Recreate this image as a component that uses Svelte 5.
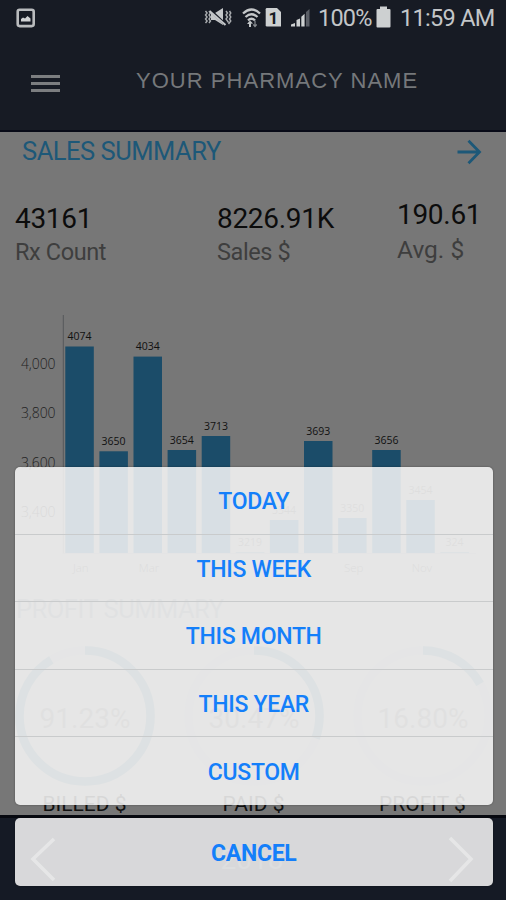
<script>
  const base = 553;
  const months = [
    { value: '4074', top: 346.5, month: 'Jan' },
    { value: '3650', top: 451.3 },
    { value: '4034', top: 356.6, month: 'Mar' },
    { value: '3654', top: 450 },
    { value: '3713', top: 436 },
    { value: '3219', top: 552.4 },
    { value: '3344', top: 520 },
    { value: '3693', top: 441 },
    { value: '3350', top: 518, month: 'Sep' },
    { value: '3656', top: 450 },
    { value: '3454', top: 500, month: 'Nov' },
    { value: '324', top: 552.4 }
  ].map((m, i) => ({ ...m, x: 65.3 + i * 34.1 }));
  const ticks = [
    { label: '4,000', y: 369 },
    { label: '3,800', y: 418 },
    { label: '3,600', y: 467.5 },
    { label: '3,400', y: 517 }
  ];
  const stats = [
    { value: '43161', label: 'Rx Count' },
    { value: '8226.91K', label: 'Sales $' },
    { value: '190.61', label: 'Avg. $' }
  ];
  const r = 65.5;
  const around = 2 * Math.PI * r;
  const rings = [
    { pct: 91.23, label: 'BILLED $' },
    { pct: 30.47, label: 'PAID $' },
    { pct: 16.8, label: 'PROFIT $' }
  ];
  const options = ['TODAY', 'THIS WEEK', 'THIS MONTH', 'THIS YEAR', 'CUSTOM'];
</script>

<div class="screen">
  <header>
    <div class="status">
      <svg class="shot" width="20" height="20" viewBox="0 0 20 20">
        <rect x="1.7" y="1.7" width="16" height="16.4" rx="2" fill="none" stroke="#b9bbbd" stroke-width="2.6" />
        <path d="M5 13.5V11l2-1.500 2 1 2.500-2.500 3 2.500v3z" fill="#d0d2d3" />
      </svg>
      <svg class="signals" width="108" height="24" viewBox="203 6 108 24">
        <g fill="none" stroke="#a9acaf" stroke-width="1.400">
          <path d="M205.500 11l1.600 2-1.600 2 1.600 2-1.600 2 1.600 2-1.600 2M209 11l1.500 2-1.500 2 1.500 2-1.500 2 1.500 2-1.500 2M226 11l1.500 2-1.500 2 1.500 2-1.500 2 1.500 2 1 1.500M229.500 11l1.300 2-1.300 2 1.300 2-1.300 2 1.300 2-2.300 3" />
        </g>
        <path d="M211 13h4l8-5v17l-8-5h-4z" fill="#c4c7c9" />
        <path d="M210 10l16 15" stroke="#171b24" stroke-width="3" />
        <path d="M209.500 11l16 14" stroke="#c4c7c9" stroke-width="2" />
        <g fill="none" stroke="#c4c7c9" stroke-width="2.300">
          <path d="M243 13.500q8.500-8 17 0M245.500 17q6-5.500 12 0M248 20.300q3.500-3 7 0" />
        </g>
        <path d="M247 24l3-3.500 3 3zM249 23h2v4h-2z" fill="#c4c7c9" />
        <path d="M255 20.500v6M253.300 24.500l1.700 2 1.700-2" fill="none" stroke="#888c91" stroke-width="1.200" />
        <path d="M267 8h10l4 4v14.500h-14q-1.300 0-1.300-1.300V9.300Q265.700 8 267 8z" fill="#cdd0d1" />
        <text x="273.300" y="24" text-anchor="middle" font-size="17" font-weight="700" fill="#171b24">1</text>
        <path d="M291 26.500v-2l4-1.500v3.500zM296.500 26.500V20l3.500-1.500v8zM301.300 26.500v-9.800l3.300-3v12.800z" fill="#cdd0d1" />
        <path d="M306 26.500V12l3.500-3v17.500z" fill="#5a5e66" />
      </svg>
      <span class="pct">100%</span>
      <svg class="battery" width="15" height="22" viewBox="0 0 15 22">
        <path d="M4 .5h7v2.500h2.500q1 0 1 1v16.500q0 1-1 1h-12q-1 0-1-1V4q0-1 1-1H4z" fill="#cdd0d1" />
      </svg>
      <span class="clock">11:59 AM</span>
    </div>
    <div class="bar">
      <div class="burger"><i></i><i></i><i></i></div>
      <h1>YOUR PHARMACY NAME</h1>
    </div>
  </header>

  <main>
    <div class="title">
      <h2>SALES SUMMARY</h2>
      <svg width="26" height="26" viewBox="0 0 26 26">
        <path d="M1.500 13h21M12.500 1.800L23.500 13l-11 11.200" fill="none" stroke="#1d5878" stroke-width="2.800" />
      </svg>
    </div>
    <div class="stats">
      {#each stats as s}
        <div class="stat"><b>{s.value}</b><span>{s.label}</span></div>
      {/each}
    </div>
    <svg class="chart" width="506" height="290" viewBox="0 300 506 290">
      <path d="M63.300 315V553.500" fill="none" stroke="#55585a" stroke-width="1" />
      <path d="M63.300 553.500H476" fill="none" stroke="#6c6e70" stroke-width="1" />
      {#each ticks as t}
        <text class="tick" x="21" y={t.y} textLength="34.500">{t.label}</text>
      {/each}
      {#each months as m}
        <rect x={m.x} y={m.top} width="28.500" height={base - m.top} fill="#1b4c69" />
        <text class="val" class:faint={m.top > 470} x={m.x + 14.2} y={m.top - 6.5} text-anchor="middle">{m.value}</text>
        {#if m.month}
          <text class="month" x={m.x + 15.5} y="572" text-anchor="middle">{m.month}</text>
        {/if}
      {/each}
    </svg>
    <h2 class="profit">PROFIT SUMMARY</h2>
    <div class="rings">
      {#each rings as g}
        <div class="ring">
          <svg width="144" height="144" viewBox="-72 -72 144 144">
            <circle {r} fill="none" stroke="#727576" stroke-width="8" />
            <circle {r} fill="none" stroke="#2b4e5c" stroke-opacity=".8" stroke-width="8.500" transform="rotate(-90)" stroke-dasharray="{(around * g.pct) / 100} {around}" />
            <text y="12" text-anchor="middle" font-size="28" fill="#505050">{g.pct.toFixed(2)}%</text>
          </svg>
          <span>{g.label}</span>
        </div>
      {/each}
    </div>
  </main>

  <footer>
    <svg width="28" height="48" viewBox="0 0 28 48"><path d="M25 4L4 24l21 21" /></svg>
    <span>2018</span>
    <svg width="28" height="48" viewBox="0 0 28 48"><path d="M3 3l21 21L3 46" /></svg>
  </footer>

  <div class="sheet">
    <div class="group">
      {#each options as o}
        <button>{o}</button>
      {/each}
    </div>
    <div class="group last"><button class="cancel">CANCEL</button></div>
  </div>
</div>

<style>
  :global(body) { margin: 0; }
  .screen {
    position: relative;
    width: 506px;
    height: 900px;
    overflow: hidden;
    display: flex;
    flex-direction: column;
    background: #777;
    font-family: Roboto, "Liberation Sans", sans-serif;
  }
  svg { display: block; flex: none; }
  svg text { font-family: Roboto, sans-serif; }
  h1, h2 { margin: 0; font-weight: 400; white-space: nowrap; }
  header {
    box-sizing: border-box;
    height: 132px;
    flex: none;
    background: #171b24;
    border-bottom: 2px solid #080a17;
  }
  .status { display: flex; height: 36px; color: #c3c6c8; font-size: 23.500px; line-height: 37px; white-space: nowrap; }
  .shot { margin: 8px 0 0 16px; }
  .signals { margin: 6px 0 0 167px; }
  .pct { margin-left: 7px; width: 54px; letter-spacing: -.8px; }
  .battery { margin: 6px 0 0 4px; }
  .clock { margin-left: 9px; letter-spacing: -.7px; }
  .bar { display: flex; align-items: center; height: 90px; }
  .burger { display: flex; flex-direction: column; gap: 4px; margin: 4px 0 0 31px; }
  .burger i { width: 29px; height: 3px; background: #7c7e80; }
  h1 {
    margin-left: 76px;
    font-family: "Liberation Sans", Arial, sans-serif;
    font-size: 22px;
    letter-spacing: 1.030px;
    color: #75787b;
  }
  main { display: flex; flex-direction: column; height: 683px; flex: none; }
  main > * { flex: none; }
  .title { display: flex; justify-content: space-between; height: 39px; padding: 0 24px 0 22px; }
  .title h2 { font-size: 25.500px; line-height: 39px; letter-spacing: -.480px; color: #1d5878; }
  .title svg { margin-top: 7px; }
  .stats { display: flex; height: 129px; }
  .stat { display: flex; flex-direction: column; width: 202px; padding-top: 31px; flex: none; }
  .stat:first-child { margin-left: 15px; }
  .stat:nth-child(2) { width: 180px; }
  .stat:last-child { padding-top: 27px; width: 100px; }
  .stat b { font-size: 28px; font-weight: 400; line-height: 33px; letter-spacing: -.3px; color: #0c0c0c; }
  .stat span { margin-top: 3px; font-size: 23.500px; line-height: 28px; letter-spacing: -.4px; color: #3e3e3e; }
  .stat:last-child span { margin-top: 5px; font-size: 24.500px; letter-spacing: 0; }
  .tick { font: 300 14px "Open Sans", sans-serif; fill: #222; }
  .val { font: 10.500px "Open Sans", sans-serif; fill: #111; }
  .val.faint { fill: #444; }
  .month { font: 300 11.500px "Open Sans", sans-serif; fill: #333; }
  .profit { height: 38px; margin-left: 16px; font-size: 25.500px; line-height: 38px; letter-spacing: -.500px; color: #50585d; }
  .rings { display: flex; margin-top: 16px; }
  .ring { display: flex; flex-direction: column; align-items: center; width: 169px; flex: none; }
  .ring span { margin-top: 4px; font-size: 21px; line-height: 25px; color: #111; }
  footer {
    display: flex;
    flex: none;
    align-items: center;
    justify-content: space-between;
    box-sizing: border-box;
    height: 85px;
    padding: 0 31px 0 29px;
    border-top: 3px solid #070910;
    background: #151a25;
    color: #3c4048;
    font-size: 28px;
  }
  footer path { fill: none; stroke: #7a7c80; stroke-width: 3.500; }
  .sheet { position: absolute; left: 14.500px; top: 467px; width: 478.500px; display: flex; flex-direction: column; gap: 13.500px; }
  .group { display: flex; flex-direction: column; border-radius: 5px; background: rgba(248, 248, 248, .86); overflow: hidden; box-shadow: 0 0 2px #0006; }
  button {
    box-sizing: border-box;
    height: 67.600px;
    padding: 3px 0 0;
    border: 0;
    border-bottom: 1.500px solid #c9cbcc;
    background: none;
    font: 500 23px Roboto, sans-serif;
    letter-spacing: -.3px;
    color: #147ffa;
  }
  button:last-child { border-bottom: 0; }
  .cancel { font-weight: 700; }
</style>
